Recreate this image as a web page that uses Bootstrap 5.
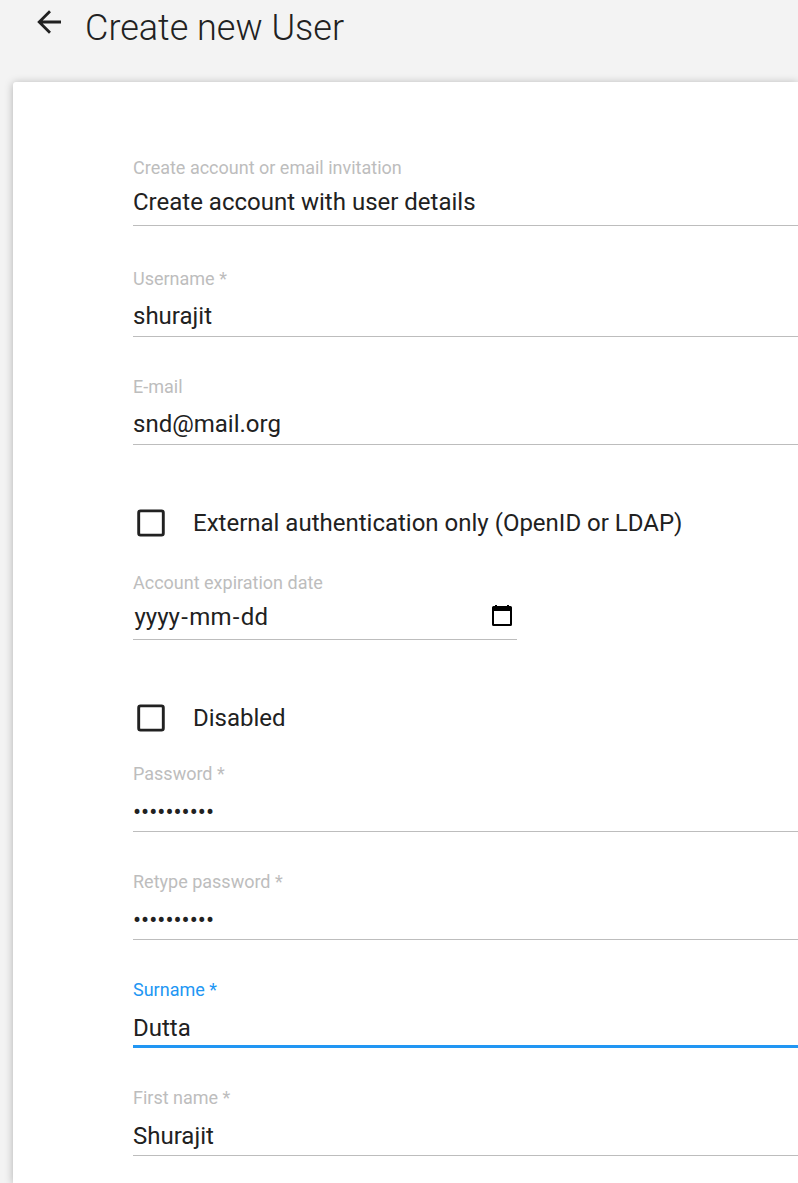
<!DOCTYPE html>
<html lang="en">
<head>
<meta charset="utf-8">
<meta name="viewport" content="width=device-width, initial-scale=1">
<title>Create new User</title>
<link href="https://cdn.jsdelivr.net/npm/bootstrap@5.3.0/dist/css/bootstrap.min.css" rel="stylesheet">
<style>
body{background:#f3f3f3;color:#212121;font-family:Roboto,sans-serif;height:1183px;overflow:hidden}
.page-head{height:82px;padding-left:37px}
.page-head svg{margin-top:10px}
.page-title{font-size:36px;font-weight:300;line-height:42px;margin:7px 0 0 24px}
.form-panel{margin-left:13px;height:1101px;padding:76px 0 0 120px;border-radius:3px 0 0 0;box-shadow:0 1px 8px rgba(0,0,0,.28)}
.field{height:68px;margin-bottom:40px;border-bottom:1px solid #bdbdbd}
.field-label{font-size:18px;line-height:20px;color:#bdbdbd;white-space:nowrap}
.field-value{font-size:24px;line-height:30px;margin-top:12px;white-space:nowrap}
.field-select{margin-bottom:43px}
.field-select .field-value,.field-date .field-value{margin-top:9px}
.field-date{height:67px;width:384px;margin-bottom:60px}
.field-date .field-value{padding:0 5px 0 1.5px}
.field-date i{font-style:normal;margin:0 1.4px}
.field-date svg{margin-top:-2px}
.field-active{border-bottom:3px solid #2196f3}
.field-active .field-label{color:#2196f3}
.low .field-value{margin-top:13px}
.check-row{height:36px;font-size:24px;line-height:36px}
.check-row svg{margin:0 28px 0 4px}
.check-external{margin:60px 0 32px}
.check-disabled{margin-bottom:28px}
</style>
</head>
<body>
<header class="page-head d-flex align-items-start">
  <svg width="25" height="24" viewBox="0 0 25 24" fill="none" stroke="#212121" stroke-width="2.8"><path d="M24 12H2.500M13 1.200L2.200 12 13 22.800"/></svg>
  <h1 class="page-title" style="margin-left:23px">Create new User</h1>
</header>
<main class="form-panel bg-white">
  <div class="field field-select"><div class="field-label">Create account or email invitation</div><div class="field-value">Create account with user details</div></div>
  <div class="field"><div class="field-label">Username *</div><div class="field-value">shurajit</div></div>
  <div class="field mb-0"><div class="field-label">E-mail</div><div class="field-value">snd@mail.org</div></div>
  <div class="check-row check-external d-flex align-items-center"><svg width="28" height="28" viewBox="0 0 28 28"><rect x="1.700" y="1.900" width="24.600" height="24.200" rx="1.800" fill="none" stroke="#212121" stroke-width="2.900"/></svg><span>External authentication only (OpenID or LDAP)</span></div>
  <div class="field field-date"><div class="field-label">Account expiration date</div><div class="field-value d-flex justify-content-between align-items-center"><span>yyyy<i>-</i>mm<i>-</i>dd</span><svg width="20" height="22" viewBox="0 0 20 22"><path fill="#000" fill-rule="evenodd" d="M3 0h2v1h10V0h2v1h1.500Q20 1 20 2.500v17Q20 21 18.500 21h-17Q0 21 0 19.500v-17Q0 1 1.500 1H3zM2 6v13h16V6z"/></svg></div></div>
  <div class="check-row check-disabled d-flex align-items-center"><svg width="28" height="28" viewBox="0 0 28 28"><rect x="1.700" y="1.900" width="24.600" height="24.200" rx="1.800" fill="none" stroke="#212121" stroke-width="2.900"/></svg><span>Disabled</span></div>
  <div class="field low"><div class="field-label">Password *</div><div class="field-value">••••••••••</div></div>
  <div class="field low"><div class="field-label">Retype password *</div><div class="field-value">••••••••••</div></div>
  <div class="field field-active low"><div class="field-label">Surname *</div><div class="field-value">Dutta</div></div>
  <div class="field low"><div class="field-label">First name *</div><div class="field-value">Shurajit</div></div>
</main>
<script src="https://cdn.jsdelivr.net/npm/bootstrap@5.3.0/dist/js/bootstrap.bundle.min.js"></script>
</body>
</html>
